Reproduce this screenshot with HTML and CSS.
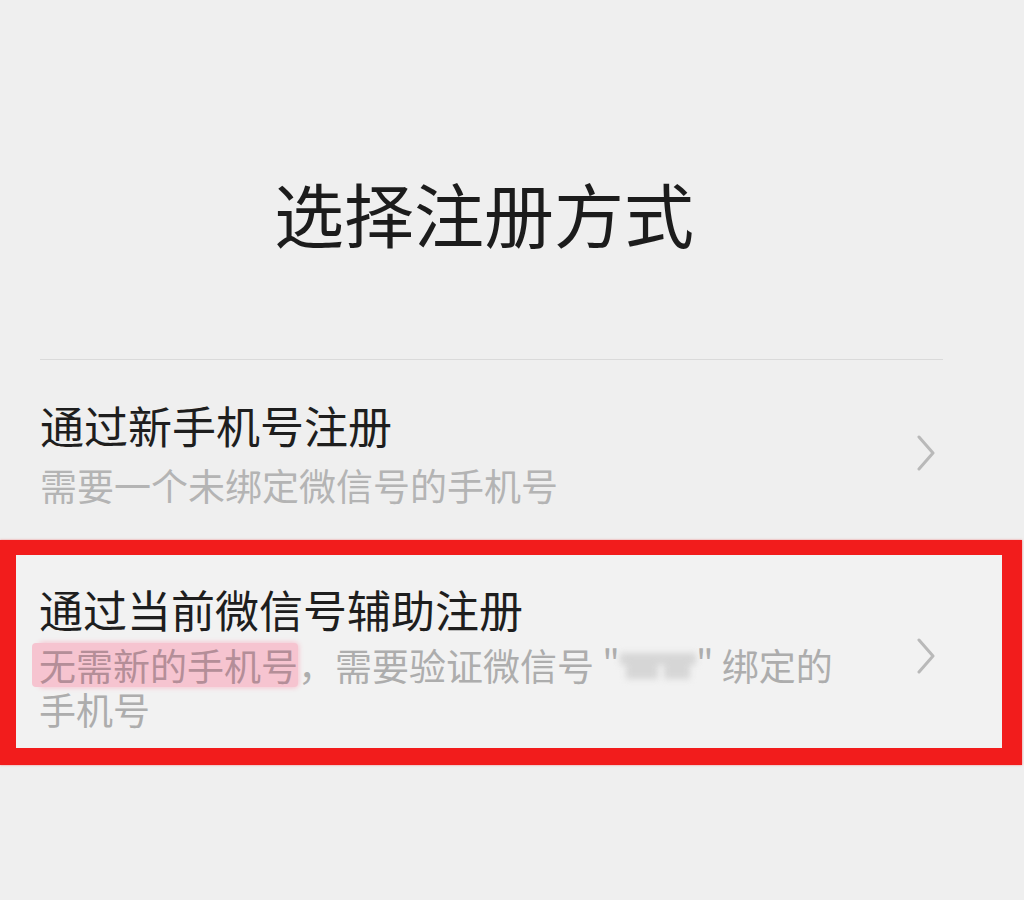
FILE: index.html
```html
<!DOCTYPE html>
<html lang="zh-CN">
<head>
<meta charset="utf-8">
<title>选择注册方式</title>
<link rel="stylesheet" href="styles.css">
</head>
<body>
<div class="page">
  <h1 class="title">选择注册方式</h1>
  <div class="divider"></div>
  <div class="option">
    <div class="text">
      <div class="opt-title">通过新手机号注册</div>
      <div class="opt-sub">需要一个未绑定微信号的手机号</div>
    </div>
    <svg class="chev" width="20" height="36" viewBox="0 0 20 36"><path d="M3 2 L17 18 L3 34" fill="none" stroke="#b9b9b9" stroke-width="3" stroke-linecap="round" stroke-linejoin="round"/></svg>
  </div>
  <div class="option boxed">
    <div class="text">
      <div class="opt-title">通过当前微信号辅助注册</div>
      <div class="opt-sub wide"><span class="hl">无需新的手机号</span><span>，需要验证微信号 "</span><span class="blur"><span class="b1"></span><span class="b2"></span><span class="b3"></span></span><span>" 绑定的</span><span>手机号</span></div>
    </div>
    <svg class="chev" width="20" height="36" viewBox="0 0 20 36"><path d="M3 2 L17 18 L3 34" fill="none" stroke="#b9b9b9" stroke-width="3" stroke-linecap="round" stroke-linejoin="round"/></svg>
  </div>
</div>
</body>
</html>
```

FILE: styles.css
```css
html, body {
  margin: 0;
  padding: 0;
  background: #efefef;
}
body {
  font-family: "Noto Sans CJK SC", "Noto Sans", sans-serif;
  width: 1024px;
  height: 900px;
  overflow: hidden;
}
.page {
  display: flex;
  flex-direction: column;
}
.title {
  margin: 0;
  padding: 178px 0 0 274px;
  font-size: 70px;
  line-height: 70px;
  font-weight: 400;
  color: #1c1c1c;
  text-align: left;
}
.divider {
  margin: 111px 81px 0 40px;
  height: 1px;
  background: #dadada;
}
.option {
  display: flex;
  align-items: center;
  justify-content: space-between;
  padding: 37px 88px 31px 40px;
}
.opt-title {
  font-size: 44px;
  line-height: 56px;
  color: #1e1e1e;
}
.opt-sub {
  margin-top: 8px;
  font-size: 37px;
  line-height: 48px;
  color: #b4b4b4;
}
.boxed {
  width: 1022px;
  box-sizing: border-box;
  border: 16px solid #f21c1c;
  border-top-width: 15px;
  border-right-width: 20px;
  border-bottom-width: 17px;
  background: #f2f2f2;
  padding: 26px 66px 17px 23px;
  box-shadow: 0 0 2px rgba(242, 28, 28, 0.5);
}
.boxed .opt-sub {
  margin-top: 6px;
  line-height: 44px;
  color: #adadad;
}
.wide {
  width: 800px;
}
.hl {
  display: inline-block;
  line-height: 44px;
  background: #f6c4d0;
  color: #b48e98;
  border-radius: 4px;
  box-shadow: -7px 0 0 #f6c4d0, 0 0 5px 1px #f6c4d0;
}
.blur {
  display: inline-block;
  position: relative;
  width: 76px;
  height: 32px;
  vertical-align: -4px;
  filter: blur(3px);
}
.b1 {
  position: absolute;
  left: 0;
  top: 0;
  width: 76px;
  height: 12px;
  background: #d6d6d6;
}
.b2 {
  position: absolute;
  left: 6px;
  top: 10px;
  width: 32px;
  height: 16px;
  background: #d6d6d6;
}
.b3 {
  position: absolute;
  left: 44px;
  top: 10px;
  width: 26px;
  height: 16px;
  background: #d6d6d6;
}
.chev {
  flex: none;
}
```
